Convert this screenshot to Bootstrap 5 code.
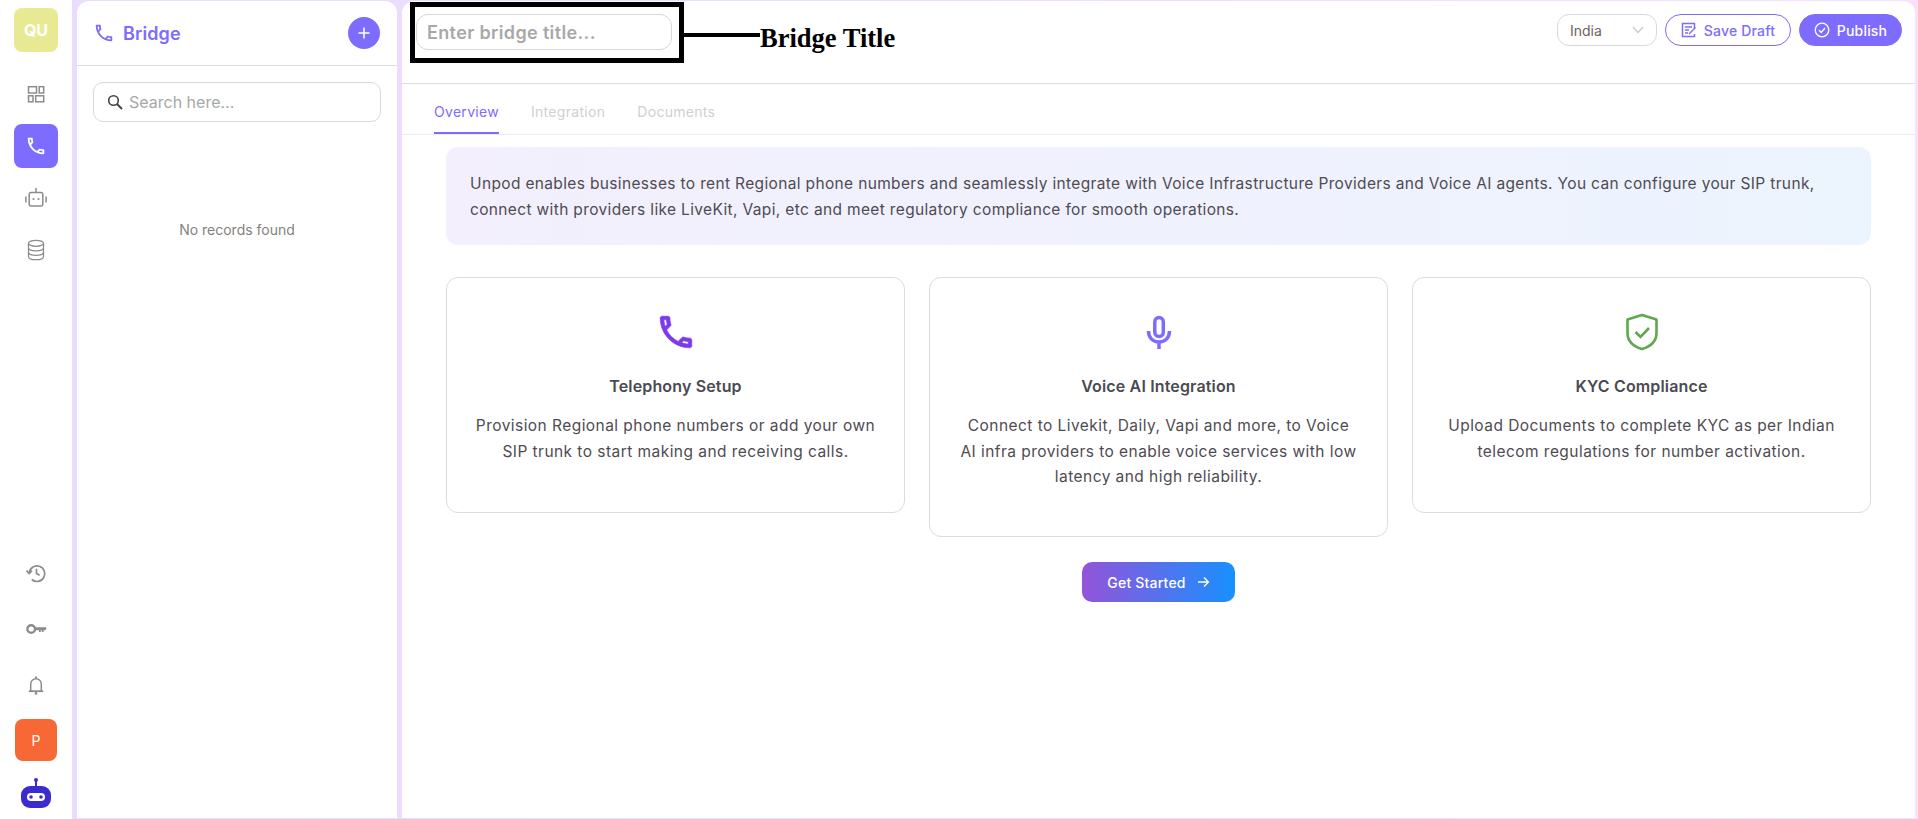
<!DOCTYPE html>
<html lang="en">
<head>
  <meta charset="UTF-8">
  <meta name="viewport" content="width=device-width, initial-scale=1">
  <title>Bridge</title>
  <link href="https://cdn.jsdelivr.net/npm/bootstrap@5.3.0/dist/css/bootstrap.min.css" rel="stylesheet">
  <style>
    html, body { height: 100%; }
    body { font-family: "Inter", "Liberation Sans", sans-serif; color: #4f4b52; background: #fff; overflow: hidden; font-size: 14px; }
    .app-shell { height: 819px; }

    /* left icon rail */
    .rail { width: 72px; padding: 8px 0 6px; flex: none; }
    .rail-btn { width: 44px; height: 44px; border-radius: 8px; color: #8c8c8c; }
    .rail-btn svg { width: 22px; height: 22px; }
    .rail-btn.is-active { background: #7d6cff; color: #fff; }
    .rail-org { background: #e8ea93; color: #fff; font-weight: 700; font-size: 16px; margin-bottom: 20px; }
    .rail-gap { margin-bottom: 8px; }
    .rail-low { margin-bottom: 12px; }
    .rail-user { width: 42px; height: 42px; border-radius: 8px; background: #f76834; color: #fff; font-size: 14px; }
    .rail-bot { width: 36px; height: 36px; margin-top: 16px; }

    /* lilac frame round the panels */
    .frame { background: linear-gradient(90deg, #e9dcfd, #f9e0fb); padding: 1px 3px 1px 5px; gap: 5px; min-width: 0; }
    .side-panel { width: 320px; flex: none; background: #fff; border-radius: 12px 12px 0 0; }
    .main-panel { background: #fff; border-radius: 12px 12px 0 0; min-width: 0; position: relative; }

    .side-head { height: 65px; padding: 0 17px 0 16px; border-bottom: 1px solid #dcdcdc; }
    .side-title { color: #7d6cff; font-size: 18px; font-weight: 600; letter-spacing: .1px; }
    .round-add { width: 32px; height: 32px; border-radius: 50%; background: #7d6cff; color: #fff; border: 0; padding: 0; }
    .search-box { margin: 16px 16px 0; height: 40px; border: 1px solid #d9d9d9; border-radius: 10px; padding: 0 13px; gap: 6px; }
    .search-box input { border: 0; outline: 0; width: 100%; font-size: 16px; padding: 0; color: #4a4a52; }
    .search-box input::placeholder { color: #a8a8a8; }
    .empty-note { margin-top: 97px; color: #85817d; font-size: 14px; text-align: center; }

    .top-bar { height: 83px; flex: none; border-bottom: 1px solid #dcdcdc; padding: 13px 13px 0 14px; }
    .title-input { width: 256px; height: 36px; border: 1px solid #d9d9d9; border-radius: 12px; padding: 0 10px; font-size: 18px; font-weight: 600; letter-spacing: .35px; outline: 0; }
    .title-input::placeholder { color: #a8a8a8; }
    .region-pick { width: 100px; height: 32px; border: 1px solid #d9d9d9; border-radius: 12px; padding: 0 12px; color: #6b645f; font-size: 14px; }
    .pill-btn { height: 32px; border-radius: 16px; font-size: 14px; font-weight: 500; letter-spacing: .2px; padding: 0; gap: 7px; }
    .pill-save { width: 126px; border: 1px solid #7d6cff; color: #7d6cff; background: #fff; }
    .pill-publish { width: 103px; border: 1px solid #7d6cff; color: #fff; background: #7d6cff; }

    /* the black note drawn on top of the screenshot */
    .note-box { position: absolute; left: 8px; top: 1px; width: 274px; height: 61px; border: 5px solid #000; pointer-events: none; }
    .note-line { position: absolute; left: 282px; top: 32px; width: 76px; height: 4px; background: #000; }
    .note-text { position: absolute; left: 358px; top: 22px; font-family: "Liberation Serif", serif; font-weight: 700; font-size: 26.5px; line-height: 30px; color: #000; }

    .tab-row { height: 51px; flex: none; border-bottom: 1px solid #ececec; padding-left: 32px; gap: 32px; }
    .tab-link { height: 50px; display: flex; align-items: center; color: #d0d0d0; font-size: 14px; letter-spacing: .3px; text-decoration: none; padding-top: 4px; }
    .tab-link.is-active { color: #7d6cff; box-shadow: inset 0 -2px 0 #7d6cff; }

    .body-wrap { padding: 12px 44px 0; }
    .info-box { height: 98px; border-radius: 12px; padding: 24px; background: linear-gradient(90deg, #f3effd, #ecf4fe); font-size: 15.5px; letter-spacing: .35px; line-height: 25.5px; }
    .feature-row { margin-top: 32px; gap: 24px; align-items: flex-start; }
    .feature-card { flex: 1 1 0; border: 1px solid #dcdcdc; border-radius: 12px; padding: 33px 22px 0; text-align: center; }
    .card-mid { height: 260px; }
    .card-side { height: 236px; }
    .feature-card svg { display: block; width: 42px; height: 42px; margin: 0 auto; }
    .feature-name { font-size: 16px; font-weight: 600; letter-spacing: .15px; margin: 21px 0 15px; line-height: 24px; color: #4a4a52; }
    .feature-text { font-size: 15.5px; letter-spacing: .45px; line-height: 25.5px; margin: 0; }
    .start-btn { width: 153px; height: 40px; margin-top: 25px; border: 0; border-radius: 10px; color: #fff; font-size: 14px; letter-spacing: .2px; font-weight: 500; gap: 10px; padding: 0; background: linear-gradient(90deg, #9453d9, #1890ff); }
  </style>
</head>
<body>
  <div class="app-shell d-flex">
    <!-- icon rail -->
    <aside class="rail d-flex flex-column align-items-center">
      <div class="rail-btn rail-org d-flex align-items-center justify-content-center">QU</div>
      <div class="rail-btn rail-gap d-flex align-items-center justify-content-center">
        <svg viewBox="0 0 22 22" fill="none" stroke="currentColor" stroke-width="1.500"><rect x="3.500" y="3.700" width="8" height="6.300"/><rect x="14.200" y="3.700" width="4.500" height="6.300"/><rect x="3.500" y="12.800" width="4.500" height="6"/><rect x="10.700" y="12.800" width="8" height="6"/></svg>
      </div>
      <div class="rail-btn rail-gap is-active d-flex align-items-center justify-content-center">
        <svg viewBox="0 0 24 24" fill="currentColor"><path d="M6.540 5c.06.89.21 1.760.45 2.590l-1.200 1.200c-.41-1.200-.67-2.470-.76-3.790h1.510m9.860 12.020c.85.24 1.720.39 2.600.45v1.490c-1.320-.09-2.590-.35-3.800-.75l1.200-1.190M7.500 3H4c-.55 0-1 .45-1 1 0 9.390 7.610 17 17 17 .55 0 1-.45 1-1v-3.490c0-.55-.45-1-1-1-1.240 0-2.450-.2-3.570-.57-.1-.04-.21-.05-.31-.05-.26 0-.51.1-.71.29l-2.200 2.200c-2.830-1.450-5.150-3.760-6.590-6.590l2.200-2.200c.28-.28.36-.67.25-1.020C8.700 6.450 8.500 5.250 8.500 4c0-.55-.45-1-1-1z"/></svg>
      </div>
      <div class="rail-btn rail-gap d-flex align-items-center justify-content-center">
        <svg viewBox="0 0 22 22" fill="none" stroke="currentColor" stroke-width="1.500"><rect x="4.200" y="5.500" width="13.600" height="13.500" rx="2"/><path d="M11 1v4.500M.9 9.500v6M21.100 9.500v6"/><circle cx="8.500" cy="12" r="1.100" fill="currentColor" stroke="none"/><circle cx="13.500" cy="12" r="1.100" fill="currentColor" stroke="none"/></svg>
      </div>
      <div class="rail-btn d-flex align-items-center justify-content-center">
        <svg viewBox="0 0 22 22" fill="none" stroke="currentColor" stroke-width="1.300"><ellipse cx="11" cy="4.300" rx="7.500" ry="3"/><path d="M3.500 4.300v13.400c0 1.700 3.400 3 7.500 3s7.500-1.300 7.500-3V4.300M3.500 8.800c0 1.700 3.400 3 7.500 3s7.500-1.300 7.500-3M3.500 13.300c0 1.700 3.400 3 7.500 3s7.500-1.300 7.500-3"/></svg>
      </div>

      <div class="mt-auto rail-btn rail-low d-flex align-items-center justify-content-center">
        <svg viewBox="0 0 22 22" fill="none" stroke="currentColor" stroke-width="1.700"><path d="M4.200 11a7.800 7.800 0 1 1 2.600 6.500"/><path d="M1.500 8.600l2.700 2.900 2.800-2.900"/><path d="M11.500 6.800v4.700l3.200 1.800"/></svg>
      </div>
      <div class="rail-btn rail-low d-flex align-items-center justify-content-center">
        <svg viewBox="0 0 22 22" fill="currentColor"><circle cx="6.200" cy="11" r="3.800" fill="none" stroke="currentColor" stroke-width="2.400"/><path d="M9.500 9.300H21l.6 1.500-1.600 1.500H18.600V14h-1.800v-1.700h-1V14H14v-1.700H9.500z"/></svg>
      </div>
      <div class="rail-btn rail-low d-flex align-items-center justify-content-center">
        <svg viewBox="0 0 22 22" fill="none" stroke="currentColor" stroke-width="1.500"><path d="M5.700 17V10a5.300 5.300 0 0 1 10.600 0v7"/><path d="M3.800 17.200h14.400" stroke-width="1.800"/><circle cx="11" cy="3.300" r="1.100" fill="currentColor" stroke="none"/><circle cx="11" cy="19.400" r="1.300" fill="currentColor" stroke="none"/></svg>
      </div>
      <div class="rail-user d-flex align-items-center justify-content-center">P</div>
      <svg class="rail-bot" viewBox="0 0 36 36">
        <circle cx="18" cy="3" r="2" fill="#3b2bd0"/><rect x="17" y="4" width="2" height="6" fill="#3b2bd0"/>
        <rect x="3" y="9" width="30" height="22" rx="9" fill="#3b2bd0"/>
        <rect x="9" y="16" width="18" height="8" rx="4" fill="#fff"/>
        <circle cx="13" cy="20" r="1.800" fill="#3b2bd0"/><circle cx="23" cy="20" r="1.800" fill="#3b2bd0"/>
      </svg>
    </aside>

    <div class="frame d-flex flex-grow-1">
      <!-- bridge list -->
      <section class="side-panel d-flex flex-column">
        <div class="side-head d-flex align-items-center">
          <svg width="22" height="22" viewBox="0 0 24 24" fill="#7d6cff" class="me-2"><path d="M6.540 5c.06.89.21 1.760.45 2.590l-1.200 1.200c-.41-1.200-.67-2.470-.76-3.790h1.510m9.860 12.020c.85.24 1.720.39 2.600.45v1.490c-1.320-.09-2.590-.35-3.800-.75l1.200-1.190M7.500 3H4c-.55 0-1 .45-1 1 0 9.390 7.610 17 17 17 .55 0 1-.45 1-1v-3.490c0-.55-.45-1-1-1-1.240 0-2.450-.2-3.570-.57-.1-.04-.21-.05-.31-.05-.26 0-.51.1-.71.29l-2.200 2.200c-2.830-1.450-5.150-3.760-6.590-6.590l2.200-2.200c.28-.28.36-.67.25-1.020C8.700 6.450 8.500 5.250 8.500 4c0-.55-.45-1-1-1z"/></svg>
          <span class="side-title">Bridge</span>
          <button class="round-add ms-auto d-flex align-items-center justify-content-center" type="button" aria-label="Add">
            <svg width="14" height="14" viewBox="0 0 14 14" stroke="#fff" stroke-width="1.600"><path d="M7 1.500v11M1.500 7h11"/></svg>
          </button>
        </div>
        <div class="search-box d-flex align-items-center">
          <svg width="16" height="16" viewBox="0 0 16 16" fill="none" stroke="#444" stroke-width="1.600" class="flex-shrink-0"><circle cx="6.500" cy="6.500" r="4.800"/><path d="M10 10l5 5" stroke-width="2"/></svg>
          <input type="text" placeholder="Search here...">
        </div>
        <p class="empty-note">No records found</p>
      </section>

      <!-- main content -->
      <main class="main-panel d-flex flex-column flex-grow-1">
        <div class="top-bar d-flex align-items-start justify-content-between">
          <input class="title-input" type="text" placeholder="Enter bridge title...">
          <div class="d-flex gap-2">
            <div class="region-pick d-flex align-items-center justify-content-between">
              India
              <svg width="12" height="8" viewBox="0 0 12 8" fill="none" stroke="#c8c8c8" stroke-width="1.200"><path d="M1 1l5 5.500L11 1"/></svg>
            </div>
            <button class="pill-btn pill-save d-flex align-items-center justify-content-center" type="button">
              <svg width="16" height="16" viewBox="0 0 16 16" fill="none" stroke="currentColor" stroke-width="1.500"><path d="M13.500 6V1.500h-12v13h12V12"/><path d="M4 5h7M4 8h4M4 11h3"/><path d="M8 12l6.500-6.500"/></svg>
              Save Draft
            </button>
            <button class="pill-btn pill-publish d-flex align-items-center justify-content-center" type="button">
              <svg width="16" height="16" viewBox="0 0 16 16" fill="none" stroke="currentColor" stroke-width="1.300"><circle cx="8" cy="8" r="6.800"/><path d="M5 8.300l2.200 2.200L11 6"/></svg>
              Publish
            </button>
          </div>
        </div>

        <div class="note-box"></div>
        <div class="note-line"></div>
        <div class="note-text">Bridge Title</div>

        <nav class="tab-row d-flex">
          <a class="tab-link is-active" href="#">Overview</a>
          <a class="tab-link" href="#">Integration</a>
          <a class="tab-link" href="#">Documents</a>
        </nav>

        <div class="body-wrap d-flex flex-column">
          <div class="info-box">Unpod enables businesses to rent Regional phone numbers and seamlessly integrate with Voice Infrastructure Providers and Voice AI agents. You can configure your SIP trunk, connect with providers like LiveKit, Vapi, etc and meet regulatory compliance for smooth operations.</div>

          <div class="feature-row d-flex">
            <div class="feature-card card-side">
              <svg viewBox="0 0 24 24" fill="#7c3aed" stroke="#7c3aed" stroke-width=".4"><path d="M6.540 5c.06.89.21 1.760.45 2.590l-1.200 1.200c-.41-1.200-.67-2.470-.76-3.790h1.510m9.860 12.020c.85.24 1.720.39 2.600.45v1.490c-1.320-.09-2.590-.35-3.800-.75l1.200-1.190M7.500 3H4c-.55 0-1 .45-1 1 0 9.390 7.610 17 17 17 .55 0 1-.45 1-1v-3.490c0-.55-.45-1-1-1-1.240 0-2.450-.2-3.570-.57-.1-.04-.21-.05-.31-.05-.26 0-.51.1-.71.29l-2.200 2.200c-2.830-1.450-5.150-3.760-6.590-6.590l2.200-2.200c.28-.28.36-.67.25-1.020C8.700 6.450 8.500 5.250 8.500 4c0-.55-.45-1-1-1z"/></svg>
              <h3 class="feature-name">Telephony Setup</h3>
              <p class="feature-text">Provision Regional phone numbers or add your own SIP trunk to start making and receiving calls.</p>
            </div>
            <div class="feature-card card-mid">
              <svg viewBox="0 0 42 42" fill="none" stroke="#7d6cff" stroke-width="3.500"><rect x="16.800" y="6.500" width="8.500" height="19" rx="4.250"/><path d="M10.500 20c0 7 4.500 11 10.500 11s10.500-4 10.500-11M21 31v7"/></svg>
              <h3 class="feature-name">Voice AI Integration</h3>
              <p class="feature-text">Connect to Livekit, Daily, Vapi and more, to Voice<br>AI infra providers to enable voice services with low latency and high reliability.</p>
            </div>
            <div class="feature-card card-side">
              <svg viewBox="0 0 42 42" fill="none" stroke="#5fa84b" stroke-width="2.600"><path d="M21 4l14.500 4.500V22c0 8.500-6 13.500-14.500 16C12.500 35.500 6.500 30.500 6.500 22V8.500z" stroke-linejoin="round"/><path d="M14.500 21l5 5 8.500-9"/></svg>
              <h3 class="feature-name">KYC Compliance</h3>
              <p class="feature-text">Upload Documents to complete KYC as per Indian telecom regulations for number activation.</p>
            </div>
          </div>

          <button class="start-btn align-self-center d-flex align-items-center justify-content-center" type="button">
            Get Started
            <svg width="14" height="14" viewBox="0 0 14 14" fill="none" stroke="#fff" stroke-width="1.300"><path d="M2 7h10M8 2.500L12.500 7 8 11.500"/></svg>
          </button>
        </div>
      </main>
    </div>
  </div>
  <script src="https://cdn.jsdelivr.net/npm/bootstrap@5.3.0/dist/js/bootstrap.bundle.min.js"></script>
</body>
</html>
